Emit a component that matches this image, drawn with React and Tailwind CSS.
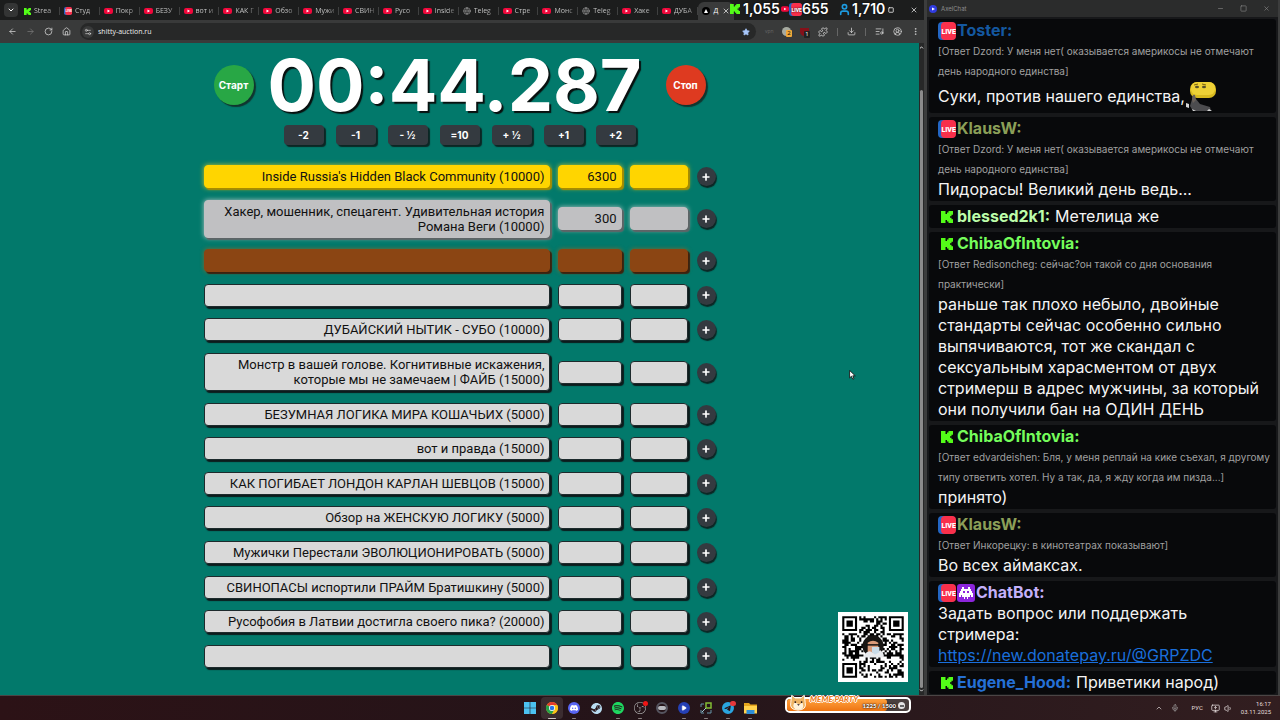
import React from "react";
import {
  ChevronDown, ChevronUp, ArrowLeft, ArrowRight, RotateCw, House, Settings2, Star, Puzzle,
  Download, ListMusic, CircleUserRound, EllipsisVertical, X, Minus, Square, Mic, Volume1,
  Globe, User, MonitorUp, Plus, Play,
} from "lucide-react";
import { SiDiscord, SiSteam, SiSpotify, SiObsstudio, SiTelegram } from "react-icons/si";

const tabs = [
  ["kick", "Strea"], ["live", "Студ"], ["yt", "Покр"], ["yt", "БЕЗУ"], ["yt", "вот и"],
  ["yt", "КАК Г"], ["yt", "Обзо"], ["yt", "Мужи"], ["yt", "СВИН"], ["yt", "Русо"],
  ["yt", "Inside"], ["web", "Teleg"], ["yt", "Стре"], ["yt", "Монс"], ["web", "Teleg"],
  ["yt", "Хаке"], ["yt", "ДУБА"],
];

const lots = [
  { name: "Inside Russia's Hidden Black Community (10000)", sum: "6300", tone: "gold" },
  { name: "Хакер, мошенник, спецагент. Удивительная история Романа Веги (10000)", sum: "300", tone: "silver", rows: 2 },
  { name: "", tone: "bronze" },
  { name: "" },
  { name: "ДУБАЙСКИЙ НЫТИК - СУБО (10000)" },
  { name: "Монстр в вашей голове. Когнитивные искажения, которые мы не замечаем | ФАЙБ (15000)", rows: 2 },
  { name: "БЕЗУМНАЯ ЛОГИКА МИРА КОШАЧЬИХ (5000)" },
  { name: "вот и правда (15000)" },
  { name: "КАК ПОГИБАЕТ ЛОНДОН КАРЛАН ШЕВЦОВ (15000)" },
  { name: "Обзор на ЖЕНСКУЮ ЛОГИКУ (5000)" },
  { name: "Мужички Перестали ЭВОЛЮЦИОНИРОВАТЬ (5000)" },
  { name: "СВИНОПАСЫ испортили ПРАЙМ Братишкину (5000)" },
  { name: "Русофобия в Латвии достигла своего пика? (20000)" },
  { name: "" },
];

const tones = {
  gold: "border-[#ffd500] bg-[#ffd500] shadow-[2px_2px_1px_#a88c00,0_0_5px_#c9c72a]",
  silver: "border-[#c0c0c2] bg-[#c0c0c2] shadow-[2px_2px_1px_#5d6466,0_0_5px_#b4c4c2]",
  bronze: "border-[#8b4513] bg-[#8b4513] shadow-[2px_2px_1px_#3d220e,0_0_4px_#7a6a30]",
  plain: "border-[#1d2a2c] bg-[#d9d9d9] shadow-[2px_2px_1px_#0c1b1c]",
};

function Kick({ className }) {
  return (
    <svg viewBox="0 0 8 8" className={className} fill="#53fc18" aria-hidden="true">
      <path d="M0 0h3v2h1v-1h1v-1h3v2.500h-1v1h-1v1h1v1h1v2.500h-3v-1h-1v-1h-1v2h-3z" />
    </svg>
  );
}

function Live({ className }) {
  return (
    <svg viewBox="0 0 18 18" className={className} aria-hidden="true">
      <rect width="17" height="18" rx="4" fill="#2366c4" />
      <rect x="3" width="15" height="18" rx="4" fill="#f9304b" />
      <text x="10.7" y="12" textAnchor="middle" fontFamily="Roboto, sans-serif" fontWeight="900" fontSize="7" fill="#fff">LIVE</text>
    </svg>
  );
}

function Invader({ className }) {
  return (
    <svg viewBox="0 0 18 18" className={className} aria-hidden="true">
      <rect width="18" height="18" rx="3" fill="#8c25dc" />
      <path fill="#fff" d="M5 3h2v2h4V3h2v2h1v2h1v2h1v4h-2v-2h-1v2h-2v2h-1v-2H8v2H7v-2H5v-2H4v2H2V9h1V7h1V5h1zM6 7v2h2V7zm4 0v2h2V7z" fillRule="evenodd" />
    </svg>
  );
}

function YouTube({ className }) {
  return (
    <svg viewBox="0 0 18 12" className={className} aria-hidden="true">
      <rect width="18" height="12" rx="4" fill="#f0083b" />
      <path d="M7 3.2v5.6L12 6z" fill="#fff" />
    </svg>
  );
}

function TabIcon({ kind }) {
  if (kind === "kick") return <Kick className="size-[7px] shrink-0" />;
  if (kind === "live") return <Live className="size-2 shrink-0" />;
  if (kind === "web") return <Globe className="size-2 shrink-0 text-[#9a9a9a]" />;
  return <YouTube className="h-[6px] w-[9px] shrink-0" />;
}

function TabStrip() {
  return (
    <div className="flex h-5 items-end bg-[#1c1d1d] pl-1">
      <button aria-label="Поиск вкладок" className="mb-[3px] flex size-[14px] shrink-0 items-center justify-center rounded bg-[#343535]">
        <ChevronDown className="size-2" strokeWidth={3} />
      </button>
      <div className="ml-0.5 flex h-[18px] min-w-0 flex-1">
        {tabs.map(([kind, title], i) => (
          <button key={i} className="flex min-w-0 flex-1 basis-0 items-center gap-[3px] pl-1">
            <TabIcon kind={kind} />
            <span className="flex-1 whitespace-nowrap bg-gradient-to-r from-[#d0d0d0] from-60% to-[#555] bg-clip-text text-left text-[7px] leading-3 text-transparent">{title}</span>
            <span className="h-2 w-px bg-[#3f4040]" />
          </button>
        ))}
      </div>
      <button className="flex h-[18px] w-9 shrink-0 items-center justify-between rounded-t-md bg-[#3a3b3b] px-1 text-[7px]">
        <svg viewBox="0 0 8 8" className="size-2" aria-hidden="true">
          <circle cx="4" cy="4" r="4" fill="#000" />
          <path d="M4 2l2 4H2z" fill="#fff" />
        </svg>
        Д
        <X className="size-2" />
      </button>
      <div className="flex h-full w-[190px] shrink-0 items-center justify-end gap-4 pr-[6px]">
        <button aria-label="Развернуть"><Square className="size-[6px]" strokeWidth={3} /></button>
        <button aria-label="Закрыть"><X className="size-2" /></button>
      </div>
    </div>
  );
}

function Toolbar() {
  return (
    <div className="flex h-[23px] items-center gap-[9px] bg-[#393a3a] pl-2 pr-1 text-[#d5d5d5]">
      <button aria-label="Назад"><ArrowLeft className="size-[9px]" /></button>
      <button aria-label="Вперёд" className="text-[#777]"><ArrowRight className="size-[9px]" /></button>
      <button aria-label="Обновить"><RotateCw className="size-[9px]" /></button>
      <button aria-label="Домой"><House className="size-[9px]" /></button>
      <div className="flex h-[17px] flex-1 items-center gap-1 rounded-full bg-[#272828] px-0.5">
        <span className="flex size-3 items-center justify-center rounded-full bg-[#393a3a]"><Settings2 className="size-2" /></span>
        <input aria-label="Адрес" defaultValue="shitty-auction.ru" className="h-3 min-w-0 flex-1 bg-transparent text-[7px] leading-3 text-[#ededed] outline-none" />
        <Star className="mr-1 size-2 fill-[#a8c7fa] text-[#a8c7fa]" />
      </div>
      <button aria-label="Расширение VPN" className="w-2 text-[5px] text-[#666]">vpn</button>
      <button aria-label="Расширение, 2" className="relative size-[9px] rounded-full bg-[#a6aaa0]">
        <span className="absolute left-1 top-[3px] h-[7px] w-[6px] rounded-[1px] bg-[#f0a83a] text-[6px] leading-[7px] text-black">2</span>
      </button>
      <button aria-label="Блокировщик, 1" className="relative h-2 w-[9px] rounded-b-md bg-[#851019]">
        <span className="absolute left-1 top-[3px] h-[7px] w-[6px] rounded-[1px] bg-[#222] text-[6px] leading-[7px] text-white">1</span>
      </button>
      <button aria-label="Расширения"><Puzzle className="size-[10px]" /></button>
      <span className="h-2 w-px bg-[#666]" />
      <button aria-label="Загрузки"><Download className="size-[9px]" /></button>
      <span className="h-2 w-px bg-[#666]" />
      <button aria-label="Медиа"><ListMusic className="size-[9px]" /></button>
      <button aria-label="Профиль"><CircleUserRound className="size-[9px]" /></button>
      <button aria-label="Меню"><EllipsisVertical className="size-[9px]" /></button>
    </div>
  );
}

function Counters() {
  return (
    <div className="absolute left-[730px] top-px z-10 flex h-4 items-center font-['Inter',sans-serif] text-[14px] font-semibold leading-4 text-white [text-shadow:0_0_2px_#000]">
      <Kick className="mr-[3px] size-[10px]" />
      <span className="w-[38px]">1,055</span>
      <YouTube className="h-[6px] w-2" />
      <Live className="size-[13px]" />
      <span className="w-[36px]">655</span>
      <User className="mr-px size-[13px] text-[#1d9be0]" strokeWidth={3} />
      <span>1,710</span>
    </div>
  );
}

const adjust = ["-2", "-1", "- ½", "=10", "+ ½", "+1", "+2"];

function Timer() {
  return (
    <div className="flex flex-col items-center">
      <div className="mt-[6px] flex h-[72px] items-center gap-3">
        <button className="size-10 rounded-full bg-[#28a745] font-['Inter',sans-serif] text-[10px] font-bold shadow-[2px_2px_1px_#10352f]">Старт</button>
        <div className="w-[388px] pl-0.5 font-['Inter',sans-serif] text-[72px] font-bold leading-[72px] [text-shadow:2px_2px_1px_#08100f]">00:44.287</div>
        <button className="size-10 rounded-full bg-[#de3a20] font-['Inter',sans-serif] text-[10px] font-bold shadow-[2px_2px_1px_#10352f]">Стоп</button>
      </div>
      <div className="mt-1 flex gap-3">
        {adjust.map((a) => (
          <button key={a} className="h-5 w-10 rounded-[4px] bg-[#343a40] font-['Inter',sans-serif] text-[10px] font-bold leading-5 shadow-[2px_2px_1px_#0c2624]">{a}</button>
        ))}
      </div>
    </div>
  );
}

function Lot({ lot, index }) {
  const tone = tones[lot.tone || "plain"];
  const field = "rounded-[4px] border px-1 text-right font-['Roboto',sans-serif] text-[13px] text-[#111] outline-none " + tone;
  return (
    <div className="flex items-center">
      <textarea aria-label={"Лот " + (index + 1)} rows={lot.rows || 1} defaultValue={lot.name} className={field + " block min-w-0 flex-1 resize-none overflow-hidden py-[3px] leading-[15px]"} />
      <input aria-label={"Сумма " + (index + 1)} defaultValue={lot.sum || ""} className={field + " ml-2 h-[23px] w-16"} />
      <input aria-label={"Добавить к сумме " + (index + 1)} defaultValue="" className={field + " ml-2 h-[23px] w-[58px]"} />
      <button aria-label="Прибавить" className="ml-[9px] flex size-[19px] items-center justify-center rounded-full bg-[#343a40] shadow-[1px_2px_1px_#0c2624]">
        <Plus className="size-[10px]" strokeWidth={4} />
      </button>
    </div>
  );
}

const QR = 29;
function qrCells() {
  const cells = [];
  let seed = 7717;
  const inFinder = (x, y) => (x < 8 && y < 8) || (x > QR - 9 && y < 8) || (x < 8 && y > QR - 9);
  for (let y = 0; y < QR; y++) {
    for (let x = 0; x < QR; x++) {
      seed = (seed * 1103515245 + 12345) % 2147483648;
      const centre = x > 9 && x < 19 && y > 9 && y < 19;
      if (!inFinder(x, y) && !centre && seed / 2147483648 < 0.5) cells.push("M" + x + " " + y + "h1v1h-1z");
    }
  }
  [[0, 0], [QR - 7, 0], [0, QR - 7]].forEach(([x, y]) => {
    cells.push("M" + x + " " + y + "h7v7h-7zm1 1v5h5v-5zm1 1h3v3h-3z");
  });
  return cells.join("");
}
const qrPath = qrCells();

function QrCode() {
  return (
    <svg viewBox="-2 -2 33 33" className="absolute bottom-[13px] right-4 size-[70px] bg-white" role="img" aria-label="QR">
      <path d={qrPath} fillRule="evenodd" />
      <circle cx="14.5" cy="14" r="5" fill="#181614" />
      <path d="M12 12.500q2.500-2 5 0v4q-2.500 4-5 0z" fill="#d99a78" />
      <path d="M10 19.500q1-3 3-3l2 1 3-1.500q2 1.500 1.500 3.500z" fill="#e8eaed" />
      <path d="M14 14.500h3.500v2.500l-2 1-1.500-1z" fill="#c9dbe8" />
      <path d="M11.500 13.500h6" stroke="#111" strokeWidth=".7" />
    </svg>
  );
}

function Auction() {
  return (
    <main className="relative flex min-h-0 flex-1 bg-[#02796b]">
      <div className="flex min-w-0 flex-1 flex-col items-center pb-[27px]">
        <div className="flex w-full max-w-[512px] flex-1 flex-col">
          <Timer />
          <div className="mt-5 flex flex-1 flex-col justify-between">
            {lots.map((lot, i) => <Lot key={i} lot={lot} index={i} />)}
          </div>
        </div>
      </div>
      <div className="flex w-[5px] flex-col items-center justify-between bg-[#272828] py-0.5">
        <ChevronUp className="size-[5px]" strokeWidth={4} />
        <span className="mt-10 w-[3px] flex-1 rounded-full bg-[#8b8b8b]" />
        <ChevronDown className="size-[5px]" strokeWidth={4} />
      </div>
      <QrCode />
      <svg viewBox="0 0 8 12" className="absolute left-[849px] top-[327px] h-[10px] w-[7px]" aria-hidden="true">
        <path d="M.5.5v9l2.200-2 1.600 3.500 1.500-.7-1.500-3.300h3z" fill="#fff" stroke="#111" />
      </svg>
    </main>
  );
}

function Emote() {
  return (
    <svg viewBox="0 0 31 31" className="h-[31px] w-[31px] shrink-0" aria-hidden="true">
      <path d="M8 15l3 3 4 5 10 3 1 4H8l-3-5z" fill="#4c4c4f" />
      <path d="M1 22l3 1v4l-3-1zM7 28l4 2H8zM24 28l3 2h-5z" fill="#d5d5d5" />
      <rect x="5" y="1" width="26" height="16" rx="7" fill="#d8b91f" />
      <rect x="6" y="1" width="24" height="13" rx="6" fill="#eed136" />
      <path d="M9 4l4-1M17 3l4 1" stroke="#7a6110" />
      <ellipse cx="12" cy="6" rx="2" ry="1.300" fill="#57502a" />
      <ellipse cx="19" cy="6" rx="2" ry="1.300" fill="#57502a" />
      <path d="M7 19q0-6 3-5l1 5-3 3z" fill="#69605a" />
    </svg>
  );
}

const messages = [
  { badges: ["live"], user: "Toster:", color: "text-[#1458a0]", reply: "[Ответ Dzord: У меня нет( оказывается америкосы не отмечают день народного единства]", text: "Суки, против нашего единства,", emote: true },
  { badges: ["live"], user: "KlausW:", color: "text-[#8b9f58]", reply: "[Ответ Dzord: У меня нет( оказывается америкосы не отмечают день народного единства]", text: "Пидорасы! Великий день ведь..." },
  { badges: ["kick"], user: "blessed2k1:", color: "text-[#bdfda9]", text: "Метелица же", inline: true },
  { badges: ["kick"], user: "ChibaOfIntovia:", color: "text-[#75fd5b]", reply: "[Ответ Redisoncheg: сейчас?он такой со дня основания практически]", text: "раньше так плохо небыло, двойные стандарты сейчас особенно сильно выпячиваются, тот же скандал с сексуальным харасментом от двух стримерш в адрес мужчины, за который они получили бан на ОДИН ДЕНЬ" },
  { badges: ["kick"], user: "ChibaOfIntovia:", color: "text-[#75fd5b]", reply: "[Ответ edvardeishen: Бля, у меня реплай на кике съехал, я другому типу ответить хотел. Ну а так, да, я жду когда им пизда...]", text: "принято)" },
  { badges: ["live"], user: "KlausW:", color: "text-[#8b9f58]", reply: "[Ответ Инкорецку: в кинотеатрах показывают]", text: "Во всех аймаксах." },
  { badges: ["live", "bot"], user: "ChatBot:", color: "text-[#c3b0fa]", text: "Задать вопрос или поддержать стримера:", link: "https://new.donatepay.ru/@GRPZDC" },
  { badges: ["kick"], user: "Eugene_Hood:", color: "text-[#2570d6]", text: "Приветики народ)", inline: true },
];

function Badge({ kind }) {
  if (kind === "live") return <Live className="size-[18px]" />;
  if (kind === "bot") return <Invader className="size-[18px]" />;
  return <Kick className="mx-[3px] size-3" />;
}

function Message({ m }) {
  return (
    <li className="shrink-0 rounded-[3px] bg-[#08090b] py-px pl-[9px] pr-0.5 text-[16px] leading-[21px] text-[#f4f4f4]">
      <div className="flex h-[21px] items-center gap-px">
        {m.badges.map((b) => <Badge key={b} kind={b} />)}
        <b className={"font-bold " + m.color}>{m.user}</b>
        {m.inline && <span className="ml-1">{m.text}</span>}
      </div>
      {m.reply && <p className="text-[10px] leading-5 text-[#a0a0a0]">{m.reply}</p>}
      {!m.inline && (
        m.emote
          ? <p className="flex h-[31px] items-center">{m.text}<Emote /></p>
          : <p className="pr-2">{m.text}</p>
      )}
      {m.link && <a href={m.link} className="block text-[#1a6fdb] underline">{m.link}</a>}
    </li>
  );
}

function Chat() {
  return (
    <aside className="flex w-[355px] shrink-0 flex-col border-x-2 border-[#3c3d3d] bg-[#17181a] font-['Inter',sans-serif]">
      <header className="flex h-[17px] shrink-0 items-center bg-[#2b2c2c] pl-0.5 pr-2 text-[#8d8d8d]">
        <svg viewBox="0 0 8 8" className="size-2" aria-hidden="true">
          <circle cx="4" cy="4" r="4" fill="#303ce0" />
          <path d="M3 2.500l3 1.500-3 1.500z" fill="#fff" />
        </svg>
        <span className="ml-1 flex-1 text-[6px] leading-3">AxelChat</span>
        <div className="flex gap-4">
          <button aria-label="Свернуть чат"><Minus className="size-[7px]" /></button>
          <button aria-label="Развернуть чат"><Square className="size-[7px]" /></button>
          <button aria-label="Закрыть чат"><X className="size-[7px]" /></button>
        </div>
      </header>
      <ul className="flex min-h-0 flex-1 flex-col gap-1 overflow-hidden px-0.5 pt-0.5">
        {messages.map((m, i) => <Message key={i} m={m} />)}
      </ul>
    </aside>
  );
}

function Windows() {
  return (
    <svg viewBox="0 0 12 12" className="size-3" aria-hidden="true">
      <path d="M0 0h5.700v5.700H0zM6.300 0H12v5.700H6.300zM0 6.300h5.700V12H0zM6.300 6.300H12V12H6.300z" fill="#4cc2f1" />
    </svg>
  );
}

function Chrome() {
  return (
    <svg viewBox="0 0 24 24" className="size-3" aria-hidden="true">
      <circle cx="12" cy="12" r="12" fill="#fbc116" />
      <path d="M12 12L1.600 6A12 12 0 0 1 22.400 6z" fill="#e33b2e" />
      <path d="M12 12L1.600 6A12 12 0 0 0 12 24l5.200-9z" fill="#24a148" />
      <path d="M12 6h10.400A12 12 0 0 1 12 24l5.200-9z" fill="#fbc116" />
      <circle cx="12" cy="12" r="6" fill="#fff" />
      <circle cx="12" cy="12" r="4.600" fill="#2c76e8" />
    </svg>
  );
}

function Folder() {
  return (
    <svg viewBox="0 0 13 12" className="h-3 w-[13px]" aria-hidden="true">
      <path d="M0 1h5l1.500 1.500H13V11H0z" fill="#e5a51d" />
      <path d="M0 4h13v7.500H0z" fill="#ffd24e" />
      <path d="M2.500 8h8v4h-8z" fill="#2d8ed8" />
    </svg>
  );
}

const apps = [
  { label: "Пуск", icon: <Windows /> },
  { label: "Chrome", icon: <Chrome />, mark: "w-2 bg-[#d0c8c8]", active: true },
  { label: "Discord", icon: <span className="flex size-3 items-center justify-center rounded-full bg-[#5865f2]"><SiDiscord className="size-2 text-white" /></span>, mark: "w-1 bg-[#8a8080]" },
  { label: "Steam", icon: <SiSteam className="size-[11px] text-[#b9dcf1]" /> },
  { label: "Spotify", icon: <SiSpotify className="size-3 text-[#1ed760]" />, mark: "w-1 bg-[#8a8080]" },
  { label: "OBS", icon: <SiObsstudio className="size-3 text-[#bdbdbd]" />, mark: "w-1 bg-[#8a8080]", dot: "size-[5px] rounded-full bg-[#f01515]" },
  { label: "Камера", icon: <span className="flex size-3 items-center justify-center rounded-full border-2 border-[#565560]"><span className="h-1 w-2 rounded-full bg-[#b9bac0]" /></span> },
  { label: "AxelChat", icon: <span className="flex size-3 items-center justify-center rounded-full bg-[#2540b5]"><Play className="size-[6px] fill-white text-white" /></span>, mark: "w-1 bg-[#8a8080]" },
  { label: "Экраны", icon: (
    <svg viewBox="0 0 12 12" className="size-3" fill="none" aria-hidden="true">
      <path d="M6 1h5v5H6z" stroke="#82bd35" strokeWidth="1.500" />
      <path d="M1 5V2h3M1 8v3h3M7 11h4V8" stroke="#6795a8" /><path d="M2 10l4-4" stroke="#9fc8d2" />
    </svg>
  ), mark: "w-1 bg-[#8a8080]" },
  { label: "Telegram", icon: <SiTelegram className="size-3 text-[#2aa5e0]" />, mark: "w-1 bg-[#8a8080]", dot: "h-[5px] w-[6px] rounded-sm bg-[#e5383b]" },
  { label: "Проводник", icon: <Folder />, mark: "w-1 bg-[#8a8080]" },
];

function MemeParty() {
  return (
    <div className="absolute left-[785px] top-[697px] h-4 w-[126px] rounded-[5px] border-2 border-white bg-[#4a403e]">
      <div className="h-full w-[100px] rounded-[3px] bg-gradient-to-b from-[#ffa23c] to-[#ee7410]" />
      <svg viewBox="0 0 20 18" className="absolute -top-[5px] left-[2px] h-[17px] w-[18px]" aria-hidden="true">
        <path d="M3 1l4 3h6l4-3 1 8q2 8-8 8.500Q0 17 2 9z" fill="#eeb364" stroke="#fff" />
        <path d="M6 9q-4 7 4 8 8 0 5-8l-3 2z" fill="#fff2dc" />
        <circle cx="7" cy="8.500" r="1" fill="#211" /><circle cx="14" cy="8.500" r="1" fill="#211" />
        <path d="M9 11h3l-1.500 1.500z" fill="#211" />
      </svg>
      <span className="absolute -top-[5px] left-[23px] whitespace-nowrap font-['Lato',sans-serif] text-[8px] font-black italic leading-[10px] text-[#ef7c20] [text-shadow:1px_0_#fff,-1px_0_#fff,0_1px_#fff,0_-1px_#fff]">MEME PARTY</span>
      <span className="absolute right-[13px] top-[3px] whitespace-nowrap font-['Lato',sans-serif] text-[6px] font-black leading-[8px] text-white [text-shadow:0_0_2px_#000,0_0_1px_#000]">1225 / 1500</span>
      <span className="absolute right-1 top-[3px] flex size-[7px] items-center justify-center rounded-full bg-[#e5e5e5]"><span className="h-[2px] w-1 bg-[#666]" /></span>
    </div>
  );
}

function Taskbar() {
  return (
    <footer className="grid h-[25px] shrink-0 grid-cols-[1fr_auto_1fr] items-center border-t border-[#4b4545] bg-gradient-to-r from-[#2c1216] via-[#241419] to-[#321e20]">
      <span />
      <nav className="flex">
        {apps.map((a) => (
          <button key={a.label} aria-label={a.label} className={"relative flex h-[22px] w-[22px] items-center justify-center rounded-sm " + (a.active ? "bg-white/10" : "")}>
            {a.icon}
            {a.dot && <span className={"absolute right-[3px] top-1 " + a.dot} />}
            {a.mark && <span className={"absolute bottom-0 h-px rounded-full " + a.mark} />}
          </button>
        ))}
      </nav>
      <div className="flex items-center justify-end pr-[9px] font-['Roboto',sans-serif] text-[#e5dede]">
        <button aria-label="Скрытые значки"><ChevronUp className="size-2" /></button>
        <Mic className="ml-2 size-2 text-[#aaa]" />
        <span className="ml-3 text-[6px] leading-3">РУС</span>
        <MonitorUp className="ml-2 size-[9px]" />
        <Volume1 className="ml-1 size-[9px]" />
        <div className="ml-2 text-right text-[6px] leading-[8px]"><div>16:17</div><div>03.11.2025</div></div>
      </div>
    </footer>
  );
}

export default function App() {
  return (
    <div className="relative flex h-screen flex-col overflow-hidden bg-[#17181a] font-['Open_Sans',sans-serif] text-white">
      <div className="flex min-h-0 flex-1">
        <section className="flex min-w-0 flex-1 flex-col border-r border-[#3c3d3d]">
          <TabStrip />
          <Toolbar />
          <Auction />
        </section>
        <Chat />
      </div>
      <Taskbar />
      <Counters />
      <MemeParty />
    </div>
  );
}
